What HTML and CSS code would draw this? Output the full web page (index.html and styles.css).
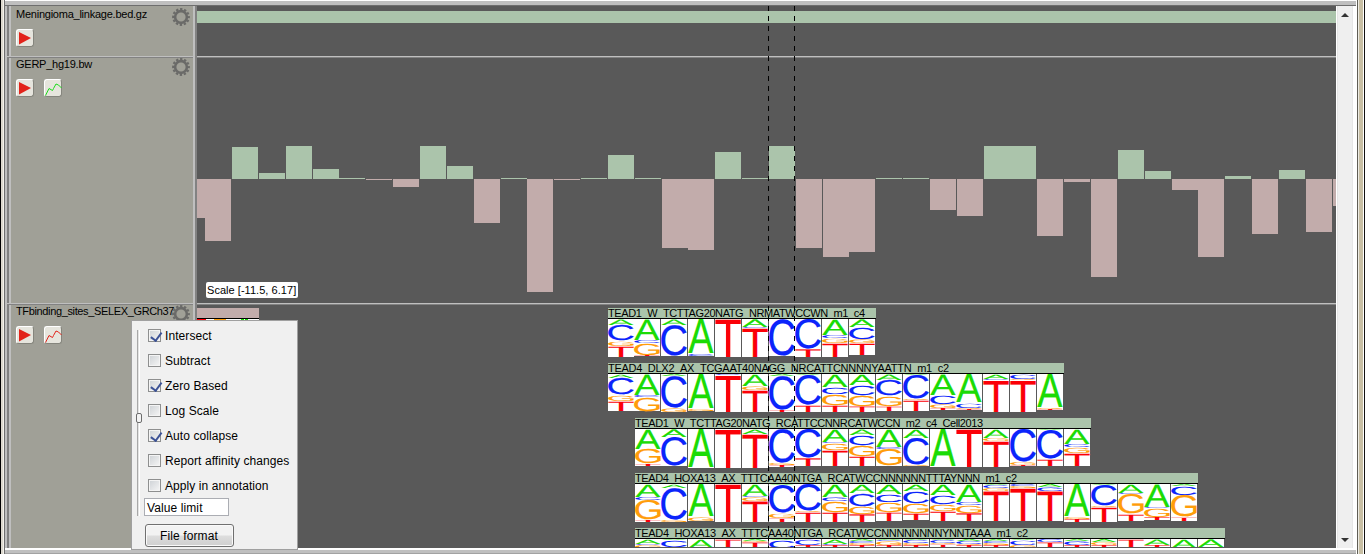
FILE: index.html
```html
<!DOCTYPE html>
<html lang="en">
<head>
<meta charset="utf-8">
<title>Genome tracks</title>
<link rel="stylesheet" href="styles.css">
</head>
<body>
<svg class="defs" width="0" height="0">
  <symbol id="gear" viewBox="0 0 18 18">
    <circle cx="9" cy="9" r="5.900" fill="none" stroke="#6a6a68" stroke-width="2.600"/>
    <circle cx="9" cy="9" r="7.900" fill="none" stroke="#6a6a68" stroke-width="2" stroke-dasharray="2.4 1.736" stroke-dashoffset="1.2"/>
  </symbol>
  <symbol id="play" viewBox="0 0 18 18">
    <path d="M3 3L15 9L3 15.500Z" fill="#e2231a"/>
  </symbol>
  <symbol id="graph" viewBox="0 0 18 18">
    <path d="M1.500 16.500L5 9.500L8.500 11.500L9.500 9.500L12 5L14.500 6L17.500 9" fill="none" stroke="currentColor" stroke-width="1"/>
  </symbol>
</svg>
<div class="window">
  <div class="edge-left"></div>
  <div class="frame">
    <div class="frame-top"></div>
    <div class="pane">
      <div class="side">
        <section class="head head-first">
          <span class="name">Meningioma_linkage.bed.gz</span>
          <svg class="gear"><use href="#gear"/></svg>
          <div class="buttons"><button class="tool"><svg><use href="#play"/></svg></button></div>
        </section>
        <section class="head head-gerp">
          <span class="name">GERP_hg19.bw</span>
          <svg class="gear"><use href="#gear"/></svg>
          <div class="buttons"><button class="tool"><svg><use href="#play"/></svg></button><button class="tool green"><svg><use href="#graph"/></svg></button></div>
        </section>
        <section class="head head-tf">
          <span class="name name-tf">TFbinding_sites_SELEX_GRCh37</span>
          <svg class="gear"><use href="#gear"/></svg>
          <div class="buttons"><button class="tool"><svg><use href="#play"/></svg></button><button class="tool red"><svg><use href="#graph"/></svg></button></div>
          <div class="popup">
            <div class="slider"><div class="thumb"></div></div>
            <div class="options">
              <label class="opt"><i class="box on"></i><span>Intersect</span></label>
              <label class="opt"><i class="box"></i><span>Subtract</span></label>
              <label class="opt"><i class="box on"></i><span>Zero Based</span></label>
              <label class="opt"><i class="box"></i><span>Log Scale</span></label>
              <label class="opt"><i class="box on"></i><span>Auto collapse</span></label>
              <label class="opt"><i class="box"></i><span>Report affinity changes</span></label>
              <label class="opt"><i class="box"></i><span>Apply in annotation</span></label>
              <div class="field">Value limit</div>
              <div class="format">File format</div>
            </div>
          </div>
        </section>
      </div>
      <div class="split"></div>
      <div class="tracks">
        <div class="track track-bed"><div class="linkage"></div></div>
        <div class="track track-gerp"><svg id="gerp" width="1139" height="245"></svg><span class="scale">Scale [-11.5, 6.17]</span></div>
        <div class="track track-tf"><svg id="motifs" width="1139" height="243"></svg></div>
        <svg class="cursor" width="30" height="542"><path d="M.5 0V542M26.500 0V542" stroke="#000" stroke-dasharray="5 5"/></svg>
      </div>
      <div class="scroll">
        <svg width="8" height="4"><path d="M4 0L8 4H0Z" fill="#333"/></svg>
        <svg width="8" height="4"><path d="M0 0H8L4 4Z" fill="#333"/></svg>
      </div>
    </div>
    <div class="frame-bottom"></div>
  </div>
  <div class="edge-right"></div>
</div>
<script src="tracks.js"></script>
</body>
</html>
```

FILE: styles.css
```css
* { box-sizing: border-box; }
body { margin: 0; background: #fff; font-family: "Liberation Sans", Arial, sans-serif; font-size: 11px; color: #000; overflow: hidden; }
.defs { position: absolute; }
.window { display: flex; width: 1365px; height: 554px; }
.edge-left { width: 5px; background: linear-gradient(90deg, #000 0 1px, #dcd8ce 1px 3px, #f4f2ec 3px 4px, #6e6e6e 4px 5px); }
.frame { width: 1351px; display: flex; flex-direction: column; background: #fff; }
.frame-top { height: 6px; background: linear-gradient(#fff 0 1px, #bfbfbf 1px 5px, #6e6e6e 5px 6px); }
.pane { height: 542px; display: flex; }
.frame-bottom { height: 6px; background: linear-gradient(#fff 0 2px, #bfbfbf 2px 5px, #a2a2a2 5px 6px); }
.edge-right { width: 9px; background: linear-gradient(90deg, #fff 0 1px, #5f5d55 1px 2px, #eeece4 2px 3px, #c8bfa4 3px 7px, #fff 7px 8px, #111 8px 9px); }

.side { width: 188px; border-left: 2px solid #bfbfbf; background: linear-gradient(90deg, #808080 0 2px, #bfbfbf 2px 4px, #a0a097 4px); display: flex; flex-direction: column; }
.head { position: relative; display: grid; grid-template-columns: 156px 18px; grid-template-rows: 21px 18px; padding-left: 9px; align-content: start; border-bottom: 2px solid; border-image: linear-gradient(#bfbfbf calc(100% - 1px), #828282 calc(100% - 1px)) 0 0 2 0; }
.head-first { height: 52px; padding-top: 2px; }
.head-gerp { height: 247px; }
.head-tf { height: 243px; border: 0; }
.name { line-height: 13px; white-space: nowrap; letter-spacing: -.24px; }
.name-tf { letter-spacing: -.36px; }
.gear { width: 18px; height: 18px; }
.buttons { display: flex; gap: 10px; }
.tool { width: 18px; height: 18px; padding: 0; border: 1px solid #fff; border-right-color: #85857d; border-bottom-color: #85857d; border-radius: 3px; background: #e6e5dd; }
.tool svg { display: block; width: 18px; height: 18px; margin: -1px; }
.green { color: #1bdc1b; }
.red { color: #e2231a; }
.split { width: 4px; background: linear-gradient(90deg, #bfbfbf 0 2px, #828282 2px 4px); }

.tracks { position: relative; width: 1139px; background: #595959; }
.track { position: relative; overflow: hidden; }
.track svg { display: block; }
.track-bed, .track-gerp { border-bottom: 2px solid; border-image: linear-gradient(#bfbfbf calc(100% - 1px), #828282 calc(100% - 1px)) 0 0 2 0; }
.track-bed { height: 52px; padding-top: 5px; }
.linkage { height: 12px; background: #abc4ab; }
.track-gerp { height: 247px; }
.track-tf { height: 243px; }
.scale { position: absolute; left: 9px; top: 224px; width: 92px; height: 16px; padding-left: 1px; border-radius: 2px; background: #fff; line-height: 16px; white-space: nowrap; letter-spacing: .04px; }
.cursor { position: absolute; left: 571px; top: 0; }
.motif-name { font-size: 11px; }
.logo { font-size: 200px; text-rendering: geometricPrecision; stroke-width: .7px; vector-effect: non-scaling-stroke; }

.scroll { width: 17px; background: linear-gradient(90deg, #fff 0 1px, #e4e4e4 1px 2px, #efefef 2px 16px, #e6e6e6 16px); display: flex; flex-direction: column; justify-content: space-between; align-items: center; padding: 7px 0 6px; }

.popup { position: absolute; z-index: 2; left: 124px; top: 15px; width: 167px; height: 230px; display: flex; background: #f0f0f0; border: 1px solid #a0a0a0; font-size: 12px; }
.slider { width: 12px; margin: 9px 0 0 1px; height: 186px; background: linear-gradient(90deg, transparent 4px, #a8a8a8 4px 5px, #e4e4e4 5px 6px, #fff 6px 7px, transparent 7px); padding: 83px 0 0 3px; }
.thumb { width: 6px; height: 10px; border: 1px solid #6d6d6d; border-radius: 2px; background: #f4f4f4; }
.options { padding-top: 2px; width: 150px; }
.opt { display: flex; align-items: center; gap: 4px; height: 25px; padding-left: 3px; white-space: nowrap; letter-spacing: .08px; }
.box { position: relative; width: 13px; height: 13px; border: 1px solid #8e8f8f; background: linear-gradient(135deg, #cdd1d5, #f6f6f6); box-shadow: inset 0 0 0 1px #f4f4f4; }
.on::after { content: ""; position: absolute; left: 3.500px; top: 0; width: 4.500px; height: 8.500px; border: solid #3c5296; border-width: 0 2px 2px 0; transform: rotate(36deg); }
.field { width: 85px; height: 18px; border: 1px solid #abadb3; background: #fff; padding-left: 2px; line-height: 18px; margin-left: -1px; letter-spacing: .1px; }
.format { width: 89px; height: 23px; margin-top: 8px; padding-right: 1px; border: 1px solid #707070; border-radius: 3px; background: linear-gradient(#f2f2f2 0 48%, #dddddd 52%, #cfcfcf); box-shadow: inset 0 0 0 1px #fafafa; text-align: center; line-height: 22px; letter-spacing: .1px; }
```

FILE: tracks.js
```js
const NS = 'http://www.w3.org/2000/svg';
function add(parent, tag, attrs, text) {
  const el = document.createElementNS(NS, tag);
  for (const k in attrs) el.setAttribute(k, attrs[k]);
  if (text) el.textContent = text;
  parent.appendChild(el);
  return el;
}
const LEFT = 197;

// GERP scores: [x, height], positive bars rise above the zero line
const gerp = [[179,-39],[205,-62],[232,32],[259,6],[286,33],[313,10],[339,1],[366,-1],[393,-8],[420,33],[447,13],[474,-44],[501,1],[527,-113],[554,-1],[581,1],[608,24],[635,1],[662,-69],[688,-71],[715,27],[742,1],[769,33],[796,-69],[823,-78],[849,-73],[876,1],[903,1],[930,-31],[957,-37],[984,33],[1010,33],[1037,-57],[1064,-3],[1091,-98],[1118,29],[1145,8],[1172,-11],[1198,-78],[1225,3],[1252,-55],[1279,9],[1306,-53],[1333,-27]];
const chart = document.getElementById('gerp');
for (const [x, h] of gerp)
  add(chart, 'rect', { x: x - LEFT, y: h > 0 ? 121 - h : 121, width: 26, height: Math.abs(h), fill: h > 0 ? '#abc4ab' : '#c2acab' });

// Sequence logos: one token per position, letter followed by its bottom edge
const motifs = [
  { name: 'TEAD1_W_TCTTAG20NATG_NRMATWCCWN_m1_c4', len: 257, start: 0,
    cells: 'A6C22G27T38 A21C24G36T37 A6C37 A35C37 T38 A8C9T38 C37 C30T38 A16C19G24T38 A8C20G24T36' },
  { name: 'TEAD4_DLX2_AX_TCGAAT40NAGG_NRCATTCNNNNYAATTN_m1_c2', len: 341, start: 0,
    cells: 'A4C21G27T37 A21C23G37 A2C34G38 A35G37 C1T38 A12G16T38 A2C36T38 A1C31T38 A13C20G31T38 A11C21G32T38 A6C22G32T37 A1C25G26T37 A21C30G34T36 A29C34G35T36 A5C6T38 C5G6T38 A34G35T36' },
  { name: 'TEAD1_W_TCTTAG20NATG_RCATTCCNNRCATWCCN_m2_c4_Cell2013', len: 348, start: 1,
    cells: 'A20G35T37 A8C37 A39 T39 A5T39 C34G36T38 C29T37 A13C14G21T37 A6C16G27T37 A18C20G37 A9C36G37 A38 T38 A9G12T38 C33G36T37 A1C30T37 A15C18G24T37' },
  { name: 'TEAD4_HOXA13_AX_TTTCAA40NTGA_RCATWCCNNNNNNTTTAYNNN_m1_c2', len: 382, start: 1,
    cells: 'A13C16G36T38 A4C36G38 A33G37 T38 A12C13G17T38 A1C29G34T38 C27G28T38 A13C17G28T38 A9C22G30T38 A10C18G28T37 A7C19G29T36 A11C20G27T37 A18C21G29T37 A1C4G7T37 C2G4T37 A3C7T37 A33G35T38 A1C22G23T38 A9C10G30T37 A23C24G33T36 A2C11G33T37' },
  { name: 'TEAD4_HOXA13_AX_TTTCAA40NTGA_RCATWCCNNNNNNNNYNNTAAA_m1_c2', len: 393, start: 1,
    cells: 'A5C6G9 A1C8 A9 T9 A2G3T9 A1C9 C6T9 A5C6T9 A2C4G6T9 A1C2G6T9 A1C4G6T9 A1C4G5T9 A2C5G6T9 A2C4G6T9 A1C6G9 C3T9 A2C6T9 A3G6T9 T9 A6T9 A9 A8C9' }
];
const colors = { A: '#1bdb05', C: '#0b24fb', G: '#ff9d0a', T: '#fb0007' };
const ctx = document.createElement('canvas').getContext('2d');
ctx.font = '200px "Liberation Sans", Arial, sans-serif';
const ink = {};
for (const c of 'ACGT') {
  const m = ctx.measureText(c);
  ink[c] = { l: -m.actualBoundingBoxLeft, r: m.actualBoundingBoxRight, up: m.actualBoundingBoxAscent, down: m.actualBoundingBoxDescent };
}
const edge = k => k === 1 ? 634 - LEFT : Math.floor(608.05 + 26.84 * k) - LEFT;
const view = document.getElementById('motifs');

add(view, 'rect', { x: 0, y: 3, width: 62, height: 10, fill: '#c2acab' });
add(view, 'rect', { x: 0, y: 13, width: 62, height: 1, fill: '#000' });
add(view, 'rect', { x: 0, y: 14, width: 62, height: 1, fill: '#fff' });
for (const [x, w, c] of [[0, 9, 'T'], [17, 12, 'G'], [44, 3, 'A'], [48, 3, 'A']])
  add(view, 'rect', { x, y: 14, width: w, height: 1, fill: colors[c] });

motifs.forEach((m, row) => {
  const top = 3 + row * 55;
  const cells = m.cells.split(' ');
  const x0 = edge(m.start) + m.start;
  const width = edge(m.start + cells.length) - x0;
  cells.forEach((cell, i) => {
    const x = i ? edge(m.start + i) : x0;
    const stack = [...cell.matchAll(/([ACGT])(\d+)/g)];
    const bottom = row === 4 ? 8 : +stack[stack.length - 1][2];
    add(view, 'rect', { x, y: top + 11, width: 26, height: bottom, fill: '#fff' });
    let y = 0;
    for (const [, c, end] of stack) {
      const b = ink[c], h = end - y, pad = h > 3 ? .3 : 0;
      const sx = 25.4 / (b.r - b.l), sy = (h - 2 * pad) / (b.up + b.down);
      add(view, 'text', { class: 'logo', fill: colors[c], stroke: h > 3 ? colors[c] : 'none',
        transform: `translate(${x + .3 - b.l * sx} ${top + 11 + y + pad + b.up * sy}) scale(${sx} ${sy})` }, c);
      y = +end;
    }
  });
  add(view, 'rect', { x: x0, y: top, width, height: 10, fill: '#abc4ab' });
  add(view, 'rect', { x: x0, y: top + 10, width, height: 1, fill: '#000' });
  add(view, 'text', { x: x0, y: top + 9, class: 'motif-name', textLength: m.len, lengthAdjust: 'spacing' }, m.name);
});
add(view, 'rect', { x: 0, y: 242, width: 1139, height: 1, fill: '#595959' });
```
